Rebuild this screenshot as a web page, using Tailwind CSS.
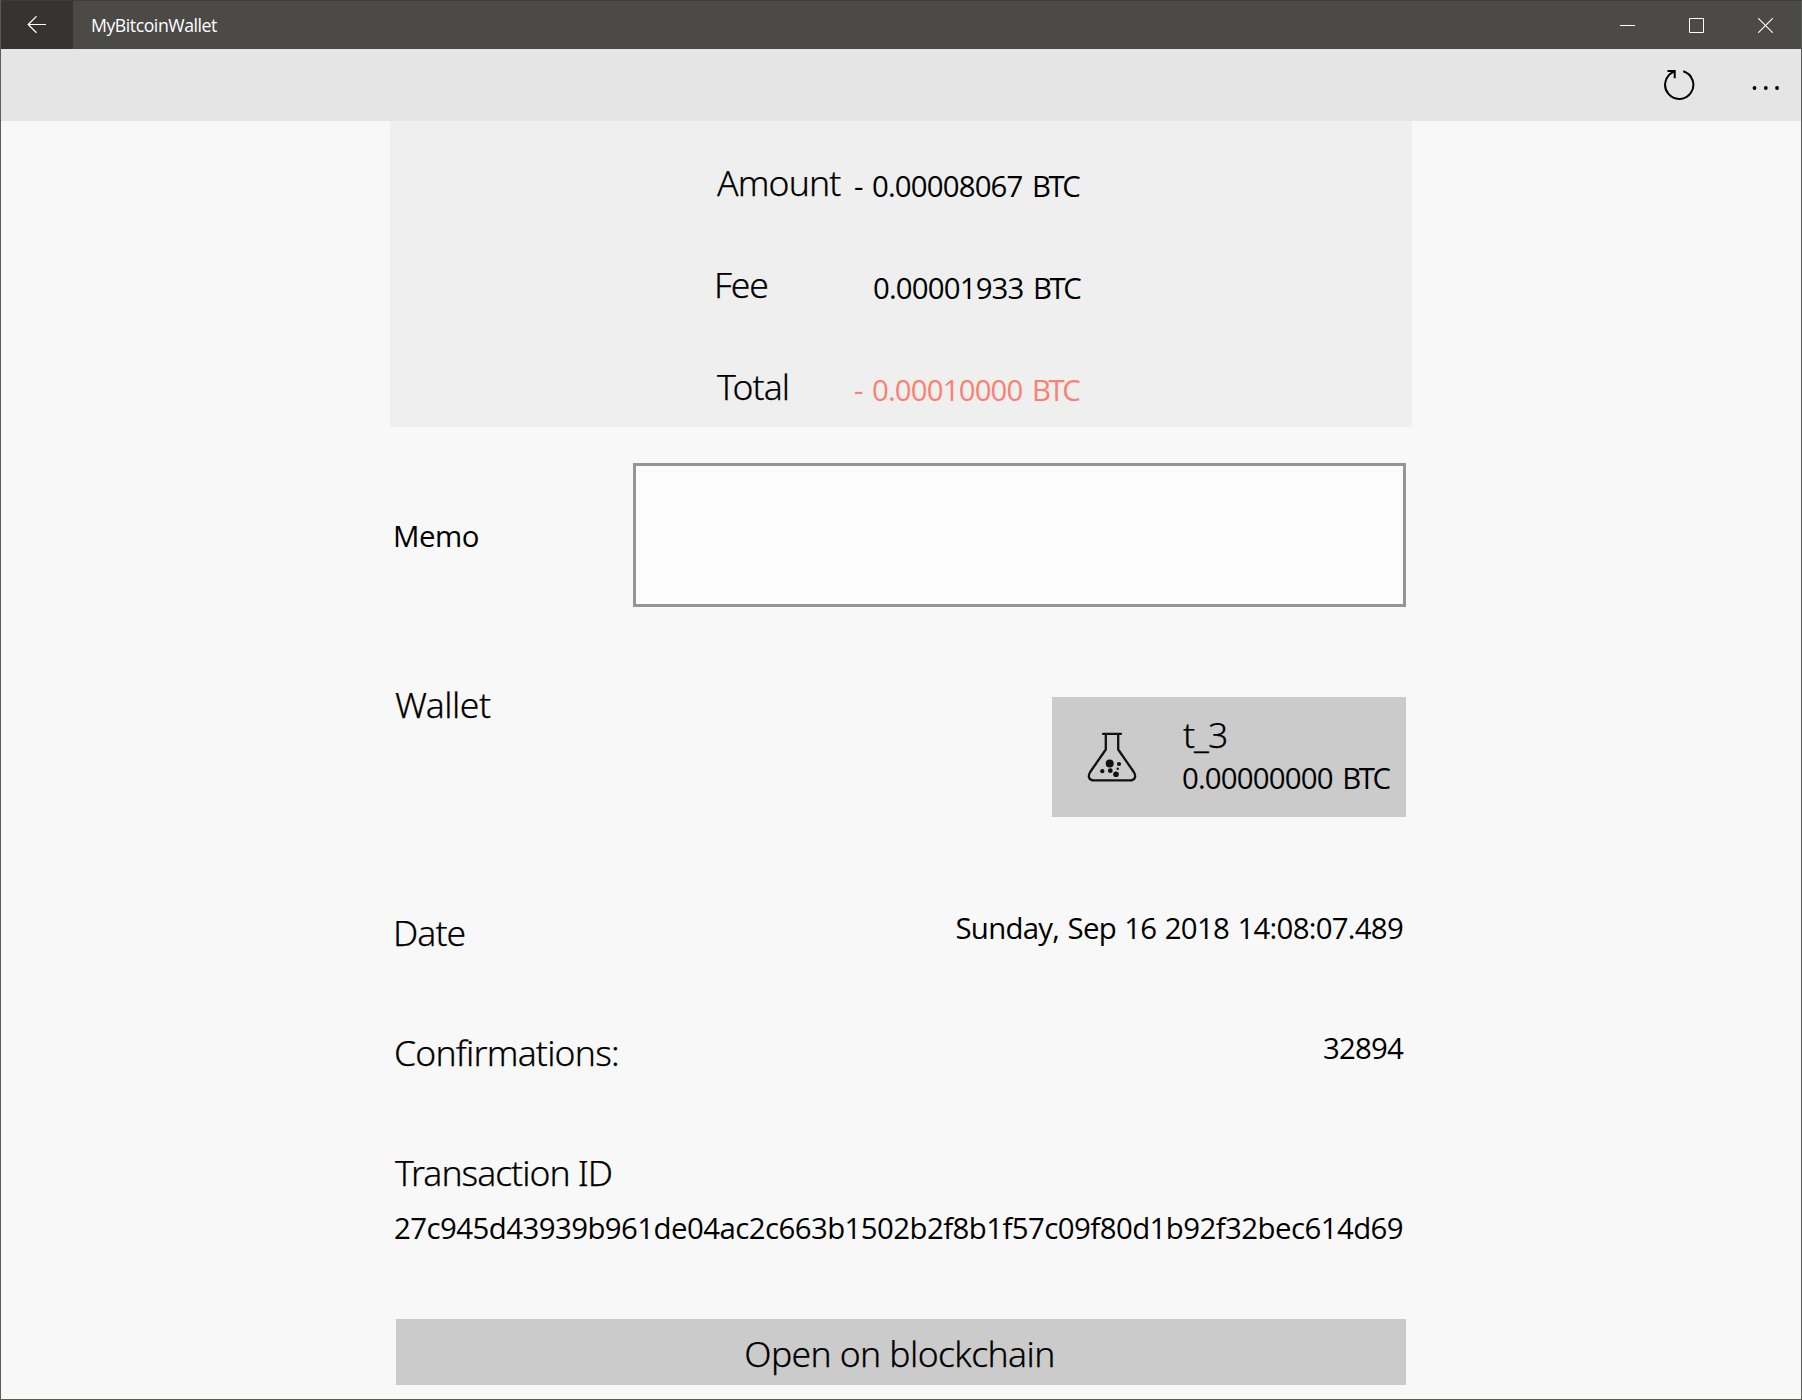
<!DOCTYPE html>
<html lang="en">
<head>
<meta charset="utf-8">
<title>MyBitcoinWallet</title>
<script src="https://cdn.jsdelivr.net/npm/@tailwindcss/browser@4"></script>
</head>
<body class="font-['Open_Sans','Noto_Sans',sans-serif] text-black">
<div class="flex h-[1400px] w-[1802px] flex-col overflow-hidden border border-[#5b5b59] border-t-[#3d3c3a] bg-[#f8f8f8]">

  <!-- Title bar -->
  <header class="flex h-12 shrink-0 bg-[#4b4a47] text-white">
    <button class="flex w-[72px] items-center justify-center bg-[#353432]" aria-label="Back">
      <svg class="h-[18px] w-[20px]" viewBox="0 0 20 18" fill="none" stroke="currentColor" stroke-width="1.2"><path d="M19 8.5H1.5M9.5 .3L1.2 8.5l8.3 8.2"/></svg>
    </button>
    <h1 class="ml-[18px] text-[17.7px] leading-[49px] tracking-[-0.458px]">MyBitcoinWallet</h1>
    <div class="mr-px ml-auto flex">
      <button class="flex w-[69px] items-center justify-center" aria-label="Minimize">
        <svg class="size-[15px]" viewBox="0 0 15 15" fill="none" stroke="currentColor"><path d="M0 7.5h15"/></svg>
      </button>
      <button class="flex w-[69px] items-center justify-center" aria-label="Maximize">
        <svg class="size-[15px]" viewBox="0 0 15 15" fill="none" stroke="currentColor"><path d="M.5 .5h14v14H.5z"/></svg>
      </button>
      <button class="flex w-[69px] items-center justify-center" aria-label="Close">
        <svg class="size-[15px]" viewBox="0 0 15 15" fill="none" stroke="currentColor" stroke-width="1.1"><path d="M.2 .2l14.6 14.6M14.8 .2L.2 14.8"/></svg>
      </button>
    </div>
  </header>

  <!-- Command bar -->
  <nav class="flex h-[72px] shrink-0 items-start justify-end bg-[#e5e5e5]">
    <button class="mt-[20px] mr-[57px]" aria-label="Refresh">
      <svg class="h-[32px] w-[32px]" viewBox="0 0 32 32" fill="none" stroke="currentColor" stroke-width="2"><path d="M20.2 2.3A14.1 14.1 0 1 1 10.6 2.9M4.5 2h7.2v7.2"/></svg>
    </button>
    <button class="mt-[37px] mr-[21px]" aria-label="More">
      <svg class="h-1 w-[28px]" viewBox="0 0 28 4" fill="currentColor"><circle cx="2.5" cy="2" r="1.9"/><circle cx="13.8" cy="2" r="1.9"/><circle cx="25" cy="2" r="1.9"/></svg>
    </button>
  </nav>

  <main class="ml-[389px] w-[1022px]">
    <!-- Amounts -->
    <section class="h-[306px] bg-[#efefef] pl-[323px]">
      <div class="flex h-[102px] w-[367px] justify-between pt-[37px]">
        <span class="pl-1 font-['Noto_Sans'] text-[35.5px] leading-[48px] font-light tracking-[-0.85px] [-webkit-text-stroke:0.25px]">Amount</span>
        <span class="pt-[8px] pr-[1.5px] text-[29.4px] leading-10 tracking-[-0.85px] [word-spacing:2.7px]">- 0.00008067 <span class="tracking-[-2.4px]">BTC</span></span>
      </div>
      <div class="flex h-[102px] w-[368px] justify-between pt-[37px]">
        <span class="pl-px font-['Noto_Sans'] text-[35.5px] leading-[48px] font-light tracking-[-1.1px] [-webkit-text-stroke:0.25px]">Fee</span>
        <span class="pt-[8px] pr-[1.5px] text-[29.4px] leading-10 tracking-[-0.85px] [word-spacing:2.7px]">0.00001933 <span class="tracking-[-2.4px]">BTC</span></span>
      </div>
      <div class="flex h-[102px] w-[367px] justify-between pt-[37px]">
        <span class="pl-1 font-['Noto_Sans'] text-[35.5px] leading-[48px] font-light tracking-[-0.9px] [-webkit-text-stroke:0.25px]">Total</span>
        <span class="pt-[8px] pr-[1.5px] text-[29.4px] leading-10 tracking-[-0.85px] [word-spacing:2.7px] text-[#fa8072]">- 0.00010000 <span class="tracking-[-2.4px]">BTC</span></span>
      </div>
    </section>

    <div class="flex flex-col pr-[6px] pl-[6px]">
      <!-- Memo -->
      <section class="mt-9 flex h-36 items-start justify-between">
        <span class="-ml-[3px] pt-[53px] text-[29.4px] leading-10 tracking-[-0.5px]">Memo</span>
        <div class="h-36 w-[773px] border-3 border-[#959595] bg-[#fcfcfc]"></div>
      </section>

      <!-- Wallet -->
      <section class="mt-[72px] flex h-[138px] items-start justify-between">
        <span class="-ml-px pt-px font-['Noto_Sans'] text-[35.5px] leading-[48px] font-light tracking-[-0.5px] [-webkit-text-stroke:0.25px]">Wallet</span>
        <div class="mt-[18px] flex h-[120px] w-[354px] bg-[#cbcbcb] pl-[35px]">
          <svg class="mt-[35px] size-[50px]" viewBox="0 0 50 50" fill="none" stroke="#111" stroke-width="2.3" stroke-linejoin="round" stroke-linecap="round">
            <path d="M16 1.8H34M18.8 2V17.5L3.2 40Q1 44 2.3 46.1Q3.5 48.3 7 48.3H43Q46.5 48.3 47.7 46.1Q49 44 46.8 40L31.2 17.5V2"/>
            <g fill="#111" stroke="none"><circle cx="22.7" cy="31.5" r="4"/><circle cx="32" cy="32" r="2.1"/><circle cx="15.3" cy="39.2" r="2.1"/><circle cx="23.3" cy="38.7" r="2.4"/><circle cx="29" cy="42.2" r="2.8"/><circle cx="30.7" cy="36.7" r="1.2"/></g>
          </svg>
          <div class="ml-[46px] flex flex-col pt-[13px]">
            <span class="font-['Noto_Sans'] text-[35.5px] leading-[48px] font-light tracking-[-0.955px] [-webkit-text-stroke:0.25px]">t_3</span>
            <span class="-ml-px text-[29.4px] leading-10 tracking-[-0.83px] [word-spacing:2.7px]">0.00000000 <span class="tracking-[-2.4px]">BTC</span></span>
          </div>
        </div>
      </section>

      <!-- Date -->
      <section class="mt-[91px] flex h-[120px] justify-between">
        <span class="-ml-[3px] font-['Noto_Sans'] text-[35.5px] leading-[48px] font-light tracking-[-0.946px] [-webkit-text-stroke:0.25px]">Date</span>
        <span class="pr-[3px] text-[29.4px] leading-10 tracking-[-0.74px] [word-spacing:1.5px]">Sunday, Sep 16 2018 14:08:07.489</span>
      </section>

      <!-- Confirmations -->
      <section class="flex h-[120px] justify-between">
        <span class="-ml-[2px] font-['Noto_Sans'] text-[35.5px] leading-[48px] font-light tracking-[-0.793px] [-webkit-text-stroke:0.25px]">Confirmations:</span>
        <span class="pr-[3px] text-[29.4px] leading-10 tracking-[-0.8px]">32894</span>
      </section>

      <!-- Transaction -->
      <section class="flex h-[171px] flex-col">
        <span class="-ml-px font-['Noto_Sans'] text-[35.5px] leading-[48px] font-light tracking-[-1px] [-webkit-text-stroke:0.25px]">Transaction ID</span>
        <span class="mt-[12px] -ml-[2px] text-[29.4px] leading-10 tracking-[-0.56px] whitespace-nowrap">27c945d43939b961de04ac2c663b1502b2f8b1f57c09f80d1b92f32bec614d69</span>
      </section>

      <button class="h-[66px] bg-[#cbcbcb] pt-[2px] pr-[3px] font-['Noto_Sans'] text-[35.5px] leading-[48px] font-light tracking-[-0.6px] [-webkit-text-stroke:0.25px]">Open on blockchain</button>
    </div>
  </main>
</div>
</body>
</html>
